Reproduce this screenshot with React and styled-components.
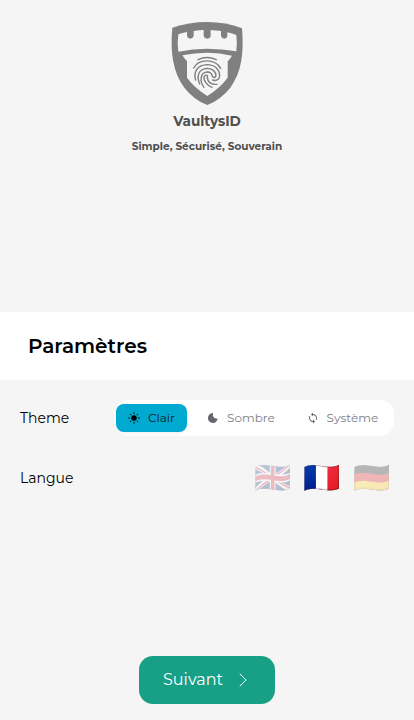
import React from 'react';
import styled, { createGlobalStyle } from 'styled-components';
import { MdSync } from 'react-icons/md';

const GlobalStyle = createGlobalStyle`
  * { box-sizing: border-box; }
  body { margin: 0; background: #f5f5f5; font-family: Montserrat, Inter, sans-serif; color: #000; }
`;

const Page = styled.main`
  display: flex;
  flex-direction: column;
  height: 720px;
  overflow: hidden;
`;

const Hero = styled.header`
  height: 312px;
  padding-top: 15px;
  display: flex;
  flex-direction: column;
  align-items: center;
  color: #4f4f4f;
`;

const Logo = styled.svg`
  width: 94px;
  height: 94px;
  flex: none;
`;

const Label = styled.span`
  display: block;
  white-space: nowrap;
  font-size: ${(p) => p.$size}px;
  font-weight: ${(p) => p.$weight || 400};
  line-height: ${(p) => p.$line || 20}px;
`;

const Tagline = styled.div`
  margin-top: 6px;
`;

const TitleBar = styled.section`
  height: 68px;
  padding-left: 28px;
  display: flex;
  align-items: center;
  background: #fff;
`;

const Settings = styled.section`
  display: flex;
  flex-direction: column;
  padding: 20px 20px 0;
  height: 276px;
  gap: 20px;
`;

const Row = styled.div`
  display: flex;
  align-items: center;
  justify-content: space-between;
  height: ${(p) => p.$height}px;
`;

const Segments = styled.div`
  display: flex;
  width: 280px;
  height: 36px;
  padding: 4px 2px;
  gap: 8px;
  border-radius: 14px;
  background: #fff;
`;

const Segment = styled.button`
  display: flex;
  align-items: center;
  gap: 8px;
  width: ${(p) => p.$width}px;
  flex: none;
  border: 0;
  border-radius: 8px;
  padding: 0 0 0 12px;
  font-family: inherit;
  color: ${(p) => (p.$active ? '#11181c' : '#7c7c85')};
  background: ${(p) => (p.$active ? '#00a9d0' : 'transparent')};
  box-shadow: ${(p) => (p.$active ? '0 1px 4px rgba(0,0,0,.08)' : 'none')};
  svg { width: 12px; height: 12px; flex: none; color: ${(p) => (p.$active ? '#000' : '#66666e')}; }
`;

const Flags = styled.div`
  display: flex;
  gap: 12.3px;
  margin-right: 3.4px;
`;

const Flag = styled.span`
  font-family: "Noto Color Emoji", sans-serif;
  font-size: 30px;
  line-height: 36px;
  opacity: ${(p) => (p.$active ? 1 : 0.25)};
`;

const Footer = styled.footer`
  display: flex;
  justify-content: center;
`;

const NextButton = styled.button`
  display: flex;
  align-items: center;
  justify-content: space-between;
  width: 136px;
  height: 48px;
  padding: 0 27px 0 24px;
  border: 0;
  border-radius: 14px;
  color: #fff;
  background: #18a086;
  font-family: Montserrat, "Open Sans", sans-serif;
`;

const Chevron = styled.svg`
  width: 10px;
  height: 16px;
`;

const Shield = () => (
  <Logo viewBox="0 0 282 282" fill="none">
    <path fill="#808080" d="M37 38Q87 21 142 21Q197 21 246 40C252 112 245 172 211 218Q181 255 142 270Q102 255 73 218C39 172 30 112 37 38Z" />
    <path fill="#f5f5f5" d="M55 58Q67 54 81 51V61Q82 71 91 71T101 61V48Q116 45 131 45V61Q132 71 142 71T152 61V45Q168 46 183 48V61Q184 71 193 71T202 61V52Q217 55 229 60Q232 84 229 109Q187 101 142 101Q97 101 55 110Q51 84 55 58Z" />
    <path fill="#f5f5f5" d="M67 121Q104 113 142 113T216 122Q208 135 203 138V188Q181 218 142 243Q103 218 81 188V138Q75 134 67 121Z" />
    <g stroke="#808080" strokeWidth="4.2" strokeLinecap="round">
      <path d="M114 134Q141 121 169 134" />
      <path d="M101 159C116 131 165 130 182 160" />
      <path d="M107 195C99 169 114 150 141 149C166 149 179 165 179 182C178 195 167 199 158 195" />
      <path d="M119 207C109 183 115 162 141 160C158 160 168 171 168 182C167 189 159 189 157 183C155 175 150 171 143 171" />
      <path d="M132 217C120 203 118 171 143 171" />
      <path d="M156 217C139 211 129 195 133 184C137 178 145 180 142 187" />
      <path d="M142 187C143 201 154 209 171 208" />
    </g>
  </Logo>
);

const Sun = () => (
  <svg viewBox="0 0 12 12">
    <circle cx="6" cy="6" r="2.7" fill="currentColor" />
    <path d="M6 .6v1.2M6 10.2v1.2M.6 6h1.2M10.2 6h1.2M2.2 2.2l.8.8M9 9l.8.8M2.2 9.8l.8-.8M9 3l.8-.8" stroke="currentColor" strokeWidth=".9" strokeLinecap="round" />
  </svg>
);

const Moon = () => (
  <svg viewBox="0 0 12 12">
    <path fill="currentColor" d="M6.2 1.1C4.9 4.3 7.2 7.3 10.7 6.5C10.4 9.2 8.4 11 5.9 11C3.1 11 1 8.8 1 6.1C1 3.2 3.2 1.1 6.2 1.1Z" />
  </svg>
);

export default function App() {
  return (
    <>
      <GlobalStyle />
      <Page>
        <Hero>
          <Shield />
          <Label $size={13.6} $weight={700} $line={24}>VaultysID</Label>
          <Tagline>
            <Label $size={10.5} $weight={700} $line={15}>Simple, Sécurisé, Souverain</Label>
          </Tagline>
        </Hero>
        <TitleBar>
          <Label $size={20} $weight={600} $line={28}>Paramètres</Label>
        </TitleBar>
        <Settings>
          <Row $height={36}>
            <Label $size={14}>Theme</Label>
            <Segments>
              <Segment $active $width={71}><Sun /><Label $size={12}>Clair</Label></Segment>
              <Segment $width={91.6}><Moon /><Label $size={12}>Sombre</Label></Segment>
              <Segment $width={95}><MdSync /><Label $size={12}>Système</Label></Segment>
            </Segments>
          </Row>
          <Row $height={44}>
            <Label $size={14}>Langue</Label>
            <Flags><Flag>🇬🇧</Flag><Flag $active>🇫🇷</Flag><Flag>🇩🇪</Flag></Flags>
          </Row>
        </Settings>
        <Footer>
          <NextButton>
            <Label $size={16}>Suivant</Label>
            <Chevron viewBox="0 0 10 16" fill="none"><path d="M2 2l6 6-6 6" stroke="currentColor" strokeWidth="1" strokeLinecap="round" /></Chevron>
          </NextButton>
        </Footer>
      </Page>
    </>
  );
}
